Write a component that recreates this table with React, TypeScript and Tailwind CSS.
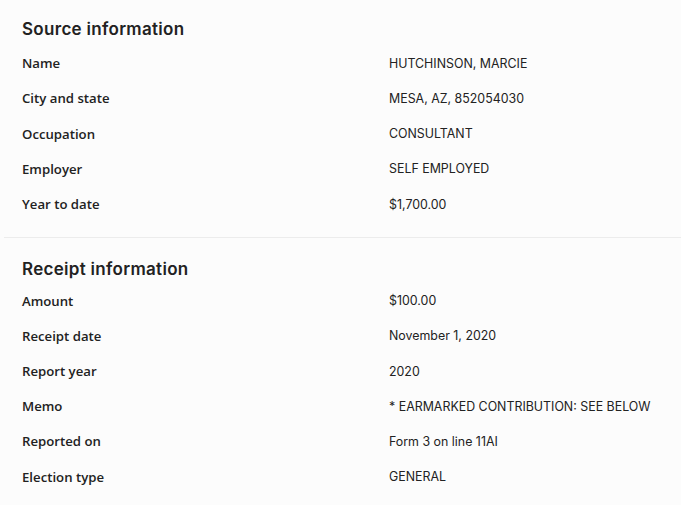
const source: [string, string][] = [
  ["Name", "HUTCHINSON, MARCIE"],
  ["City and state", "MESA, AZ, 852054030"],
  ["Occupation", "CONSULTANT"],
  ["Employer", "SELF EMPLOYED"],
  ["Year to date", "$1,700.00"],
];

const receipt: [string, string][] = [
  ["Amount", "$100.00"],
  ["Receipt date", "November 1, 2020"],
  ["Report year", "2020"],
  ["Memo", "* EARMARKED CONTRIBUTION: SEE BELOW"],
  ["Reported on", "Form 3 on line 11AI"],
  ["Election type", "GENERAL"],
];

function Rows({ rows }: { rows: [string, string][] }) {
  return (
    <div>
      {rows.map(([label, value]) => (
        <div key={label} className="grid h-[35.2px] grid-cols-[367px_1fr] items-center">
          <span className="font-['Open_Sans',sans-serif] text-[13.2px] font-semibold text-[#222]">{label}</span>
          <span className="font-['Inter',sans-serif] text-[12.4px] text-[#222]">{value}</span>
        </div>
      ))}
    </div>
  );
}

export default function App() {
  return (
    <div className="h-[505px] w-[681px] bg-[#fcfcfc] pl-1">
      <section className="px-[18px] pt-[17px] pb-[15px]">
        <h2 className="mb-[5.5px] font-['Inter',sans-serif] text-[17px] leading-6 font-semibold tracking-[0.3px] text-[#222]">
          Source information
        </h2>
        <Rows rows={source} />
      </section>
      <div className="h-px bg-[#ececec]" />
      <section className="px-[18px] pt-[19px]">
        <h2 className="mb-[2.5px] font-['Inter',sans-serif] text-[17px] leading-6 font-semibold tracking-[0.3px] text-[#222]">
          Receipt information
        </h2>
        <Rows rows={receipt} />
      </section>
    </div>
  );
}
